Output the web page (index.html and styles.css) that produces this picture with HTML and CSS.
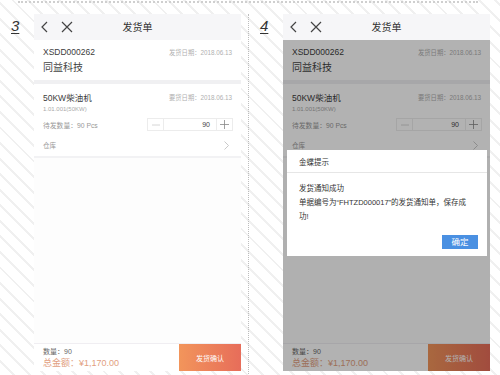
FILE: index.html
```html
<!DOCTYPE html>
<html lang="zh">
<head>
<meta charset="utf-8">
<title>发货单</title>
<link rel="stylesheet" href="styles.css">
</head>
<body>
<div class="top-rule"></div>
<div class="row">
  <section class="half first">
    <div class="label"><span>3</span></div>
    <div class="phone">
      <header class="nav">
        <svg class="nav-icon" width="10" height="12" viewBox="0 0 10 12"><polyline points="7,1 2,6 7,11" fill="none" stroke="#444" stroke-width="1.2"/></svg>
        <svg class="nav-icon close" width="12" height="12" viewBox="0 0 12 12"><path d="M1 1 L11 11 M11 1 L1 11" stroke="#444" stroke-width="1.2"/></svg>
        <div class="nav-title">发货单</div>
      </header>
      <div class="content">
        <div class="card head-card">
          <div class="line"><span class="code">XSDD000262</span><span class="date">发货日期：2018.06.13</span></div>
          <div class="company">同益科技</div>
        </div>
        <div class="card item-card">
          <div class="line"><span class="name">50KW柴油机</span><span class="date">要货日期：2018.06.13</span></div>
          <div class="spec">1.01.001(50KW)</div>
          <div class="qty-row">
            <span class="qty">待发数量：90 Pcs</span>
            <div class="stepper">
              <span class="step minus"><svg width="8" height="8" viewBox="0 0 8 8"><path d="M0 4 H8" stroke="#ccc" stroke-width="0.8"/></svg></span>
              <span class="step-val">90</span>
              <span class="step plus"><svg width="9" height="9" viewBox="0 0 9 9"><path d="M0 4.5 H9 M4.5 0 V9" stroke="#888" stroke-width="0.8"/></svg></span>
            </div>
          </div>
          <div class="wh-row"><span>仓库</span><svg width="5" height="9" viewBox="0 0 5 9"><polyline points="0.5,0.5 4.5,4.5 0.5,8.5" fill="none" stroke="#bbb" stroke-width="0.8"/></svg></div>
        </div>
        <div class="rest"></div>
      </div>
      <footer class="bar">
        <div class="totals">
          <div class="count">数量：90</div>
          <div class="sum">总金额：¥1,170.00</div>
        </div>
        <div class="confirm">发货确认</div>
      </footer>
    </div>
  </section>
  <section class="half second">
    <div class="label"><span>4</span></div>
    <div class="phone">
      <header class="nav">
        <svg class="nav-icon" width="10" height="12" viewBox="0 0 10 12"><polyline points="7,1 2,6 7,11" fill="none" stroke="#444" stroke-width="1.2"/></svg>
        <svg class="nav-icon close" width="12" height="12" viewBox="0 0 12 12"><path d="M1 1 L11 11 M11 1 L1 11" stroke="#444" stroke-width="1.2"/></svg>
        <div class="nav-title">发货单</div>
      </header>
      <div class="content">
        <div class="card head-card">
          <div class="line"><span class="code">XSDD000262</span><span class="date">发货日期：2018.06.13</span></div>
          <div class="company">同益科技</div>
        </div>
        <div class="card item-card">
          <div class="line"><span class="name">50KW柴油机</span><span class="date">要货日期：2018.06.13</span></div>
          <div class="spec">1.01.001(50KW)</div>
          <div class="qty-row">
            <span class="qty">待发数量：90 Pcs</span>
            <div class="stepper">
              <span class="step minus"><svg width="8" height="8" viewBox="0 0 8 8"><path d="M0 4 H8" stroke="#ccc" stroke-width="0.8"/></svg></span>
              <span class="step-val">90</span>
              <span class="step plus"><svg width="9" height="9" viewBox="0 0 9 9"><path d="M0 4.5 H9 M4.5 0 V9" stroke="#888" stroke-width="0.8"/></svg></span>
            </div>
          </div>
          <div class="wh-row"><span>仓库</span><svg width="5" height="9" viewBox="0 0 5 9"><polyline points="0.5,0.5 4.5,4.5 0.5,8.5" fill="none" stroke="#bbb" stroke-width="0.8"/></svg></div>
        </div>
        <div class="rest"></div>
      </div>
      <footer class="bar">
        <div class="totals">
          <div class="count">数量：90</div>
          <div class="sum">总金额：¥1,170.00</div>
        </div>
        <div class="confirm">发货确认</div>
      </footer>
      <div class="overlay">
        <div class="dialog">
          <div class="dlg-title">金蝶提示</div>
          <div class="dlg-body">
            <p>发货通知成功</p>
            <p>单据编号为“FHTZD000017”的发货通知单，保存成功!</p>
          </div>
          <div class="dlg-actions"><span class="dlg-btn">确定</span></div>
        </div>
      </div>
    </div>
  </section>
</div>
</body>
</html>
```

FILE: styles.css
```css
* { box-sizing: border-box; }
html, body { margin: 0; padding: 0; }
body {
  width: 500px;
  height: 375px;
  overflow: hidden;
  font-family: "Liberation Sans", "Noto Sans CJK SC", sans-serif;
  color: #333;
  background: #fff repeating-linear-gradient(45deg, #fff 0px, #fff 9px, #f0f0f0 9px, #f0f0f0 11px);
}
.top-rule {
  margin: 1px 22px 0 18px;
  border-top: 2px dotted #cfcfcf;
}
.row {
  display: flex;
  margin-top: 11px;
}
.half {
  display: flex;
  height: 362px;
}
.half.first {
  width: 249px;
  padding-left: 11px;
  border-right: 1px dotted #bdbdbd;
}
.half.second {
  width: 251px;
  padding-left: 11px;
}
.label {
  width: 23px;
  padding-top: 3px;
}
.label span {
  font-size: 15px;
  font-style: italic;
  text-decoration: underline;
  text-underline-offset: 2px;
  color: #333;
}
.phone {
  position: relative;
  width: 207px;
  height: 357px;
  display: flex;
  flex-direction: column;
  background: #fcfcfd;
}
.nav {
  position: relative;
  height: 26px;
  background: #f6f6f8;
  display: flex;
  align-items: center;
  padding-left: 6px;
  gap: 11px;
}
.nav-icon { display: block; }
.nav-title {
  position: absolute;
  left: 0;
  right: 0;
  top: 0;
  line-height: 26px;
  text-align: center;
  font-family: "Noto Sans CJK SC", sans-serif;
  font-size: 10px;
  color: #333;
  pointer-events: none;
}
.content {
  flex: 1;
  display: flex;
  flex-direction: column;
}
.card {
  background: #fff;
  padding: 0 9px;
}
.head-card {
  padding-top: 5px;
  padding-bottom: 5px;
  border-bottom: 4px solid #f0f0f2;
}
.line {
  display: flex;
  justify-content: space-between;
  align-items: center;
  height: 14px;
}
.code {
  font-size: 8.5px;
  color: #3c3c3c;
}
.date {
  font-size: 6.3px;
  color: #b0b0b0;
}
.company {
  font-family: "Noto Sans CJK SC", sans-serif;
  font-size: 10px;
  line-height: 16px;
  color: #444;
}
.item-card {
  padding-top: 6px;
  padding-bottom: 4px;
  border-bottom: 2px solid #f2f2f4;
}
.name {
  font-size: 8.5px;
  color: #3c3c3c;
}
.spec {
  font-size: 6px;
  line-height: 10px;
  color: #aaa;
}
.qty-row {
  margin-top: 4px;
  display: flex;
  justify-content: space-between;
  align-items: center;
  height: 13px;
}
.qty {
  font-size: 6.8px;
  color: #999;
}
.stepper {
  display: flex;
  width: 86px;
  height: 13px;
  border: 1px solid #ececec;
  margin-right: -1px;
}
.step {
  width: 16px;
  display: flex;
  align-items: center;
  justify-content: center;
}
.step.minus { border-right: 1px solid #ececec; }
.step.plus { border-left: 1px solid #ececec; }
.step-val {
  flex: 1;
  text-align: right;
  padding-right: 6px;
  font-size: 7px;
  line-height: 11px;
  color: #444;
}
.wh-row {
  margin-top: 7px;
  height: 14px;
  display: flex;
  justify-content: space-between;
  align-items: center;
  font-size: 6.5px;
  color: #999;
  padding-right: 3px;
}
.rest {
  flex: 1;
  background: #fdfdfd;
}
.bar {
  height: 28px;
  display: flex;
  background: #fff;
  border-top: 1px solid #f0eef2;
}
.totals {
  flex: 1;
  padding: 3px 0 0 9px;
}
.count {
  font-size: 7px;
  line-height: 10px;
  color: #666;
}
.sum {
  font-size: 9px;
  line-height: 13px;
  color: #e2a07f;
}
.confirm {
  width: 62px;
  display: flex;
  align-items: center;
  justify-content: center;
  font-size: 7px;
  color: #fff;
  background: linear-gradient(90deg, #f2955b, #e76d5a);
}
.overlay {
  position: absolute;
  left: 0;
  right: 0;
  top: 26px;
  bottom: 0;
  background: rgba(0, 0, 0, 0.3);
  display: flex;
  align-items: flex-start;
  justify-content: center;
  padding-top: 110px;
}
.dialog {
  width: 200px;
  background: #fff;
  margin-left: 1px;
}
.dlg-title {
  height: 23px;
  padding: 7px 12px 0;
  font-size: 7.5px;
  line-height: 12px;
  color: #333;
  border-bottom: 1px solid #e6e6e6;
}
.dlg-body {
  padding: 9px 12px 0;
  font-size: 7.5px;
  line-height: 14px;
  color: #333;
}
.dlg-body p { margin: 0; }
.dlg-actions {
  display: flex;
  justify-content: flex-end;
  padding: 11px 9px 7px;
}
.dlg-btn {
  width: 36px;
  height: 14px;
  line-height: 14px;
  text-align: center;
  background: #4a90e2;
  color: #fff;
  font-size: 8.5px;
}
```
